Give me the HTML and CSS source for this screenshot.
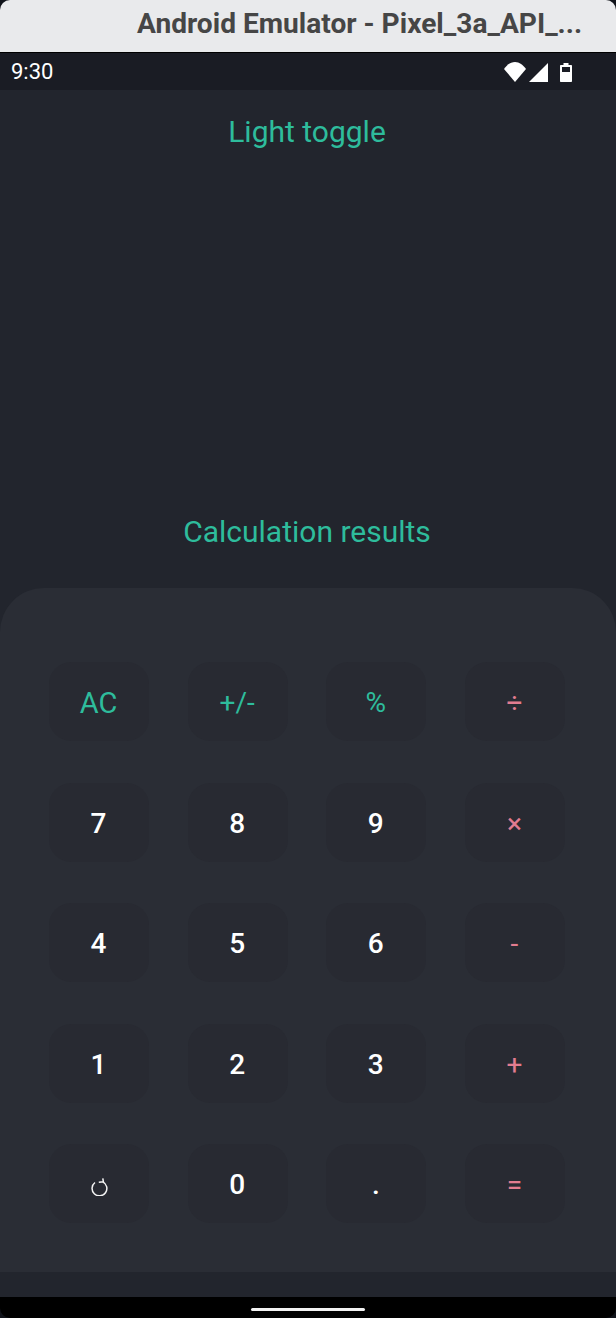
FILE: index.html
```html
<!DOCTYPE html>
<html lang="en">
<head>
  <meta charset="UTF-8">
  <title>Android Emulator - Calculator</title>
  <link rel="stylesheet" href="styles.css">
</head>
<body>
  <div id="window">
    <div id="titlebar">Android Emulator - Pixel_3a_API_...</div>

    <div id="statusbar">
      <span class="time">9:30</span>
      <div class="status-icons">
        <svg class="wifi" width="22" height="20" viewBox="0 0 22 20"><path d="M0 7C3 3 6.500 0 11 0S19 3 22 7L11 20Z" fill="#fff"/></svg>
        <svg class="signal" width="19" height="20" viewBox="0 0 19 20"><path d="M0 20L19 1V20Z" fill="#fff"/></svg>
        <svg class="battery" width="12" height="20" viewBox="0 0 12 20"><path d="M3.500 1H8.500V3H11C11.600 3 12 3.400 12 4V19C12 19.600 11.600 20 11 20H1C0.400 20 0 19.600 0 19V4C0 3.400 0.400 3 1 3H3.500ZM2 5V10H10V5Z" fill="#fff" fill-rule="evenodd"/></svg>
      </div>
    </div>

    <div id="main">
      <div class="toggle">Light toggle</div>
      <div class="results">Calculation results</div>

      <div id="keypad">
        <button class="key accent">AC</button>
        <button class="key accent symbol">+/-</button>
        <button class="key accent symbol">%</button>
        <button class="key operator">÷</button>

        <button class="key">7</button>
        <button class="key">8</button>
        <button class="key">9</button>
        <button class="key operator">×</button>

        <button class="key">4</button>
        <button class="key">5</button>
        <button class="key">6</button>
        <button class="key operator">-</button>

        <button class="key">1</button>
        <button class="key">2</button>
        <button class="key">3</button>
        <button class="key operator">+</button>

        <button class="key undo" aria-label="Undo">
          <svg width="18" height="18" viewBox="0 0 18 18" fill="none" stroke="#f4f4f4" stroke-width="1.500">
            <path d="M5 4.500A7.400 7.400 0 1 0 12.800 3.800"/>
            <path d="M8.800 4.200L13.400 3.800L12.800 0.300"/>
          </svg>
        </button>
        <button class="key">0</button>
        <button class="key">.</button>
        <button class="key operator">=</button>
      </div>
      <div id="gap"></div>
    </div>

    <div id="navbar"><div class="home"></div></div>
  </div>
</body>
</html>
```

FILE: styles.css
```css
html, body {
  margin: 0;
  height: 100%;
  background: #10131a;
  overflow: hidden;
}

#window {
  height: 1318px;
  display: flex;
  flex-direction: column;
  font-family: Roboto, "Liberation Sans", sans-serif;
  border-radius: 10px;
  overflow: hidden;
}

#titlebar {
  height: 52px;
  flex-shrink: 0;
  box-sizing: border-box;
  padding-left: 137px;
  line-height: 48px;
  font-size: 28.100px;
  font-weight: 700;
  color: #464646;
  background: #e9eaec;
  white-space: nowrap;
}

#statusbar {
  height: 38px;
  flex-shrink: 0;
  box-sizing: border-box;
  border-top: 1px solid #000;
  background: #1a1c24;
  display: flex;
  align-items: center;
  justify-content: space-between;
  padding: 0 44px 0 11px;
  color: #fff;
}

.time {
  font-size: 22px;
}

.status-icons {
  display: flex;
  align-items: center;
}

.signal {
  margin-left: 3px;
}

.battery {
  margin-left: 12px;
}

#main {
  flex: 1;
  display: flex;
  flex-direction: column;
  background: #22252d;
  color: #2ebc9c;
  text-align: center;
}

.toggle {
  height: 82px;
  padding-right: 2px;
  line-height: 84px;
  font-size: 30px;
}

.results {
  height: 416px;
  box-sizing: border-box;
  padding: 318px 2px 0 0;
  line-height: 84px;
  font-size: 30px;
}

#keypad {
  height: 684px;
  box-sizing: border-box;
  padding: 74px 51px 0 49px;
  background: #2a2d35;
  border-radius: 44px 44px 0 0;
  display: grid;
  grid-template-columns: repeat(4, 100px);
  grid-auto-rows: 79px;
  justify-content: space-between;
  row-gap: 41.600px;
}

.key {
  border: 0;
  padding: 2px 1px 0 0;
  border-radius: 22px;
  background: #282a32;
  color: #fff;
  font-family: inherit;
  font-size: 28px;
  font-weight: 500;
}

.key.accent {
  color: #2ebc9c;
  font-size: 29px;
  font-weight: 400;
}

.key.symbol {
  font-size: 28px;
}

.key.operator {
  color: #e27c90;
  font-size: 28px;
  font-weight: 400;
}

.key.undo {
  display: flex;
  align-items: center;
  justify-content: center;
  padding: 7px 0 0;
}

#gap {
  flex: 1;
}

#navbar {
  height: 21px;
  flex-shrink: 0;
  box-sizing: border-box;
  background: #000;
  display: flex;
  justify-content: center;
  padding-top: 11px;
}

.home {
  width: 114px;
  height: 3px;
  border-radius: 2px;
  background: #f2f2f2;
}
```
